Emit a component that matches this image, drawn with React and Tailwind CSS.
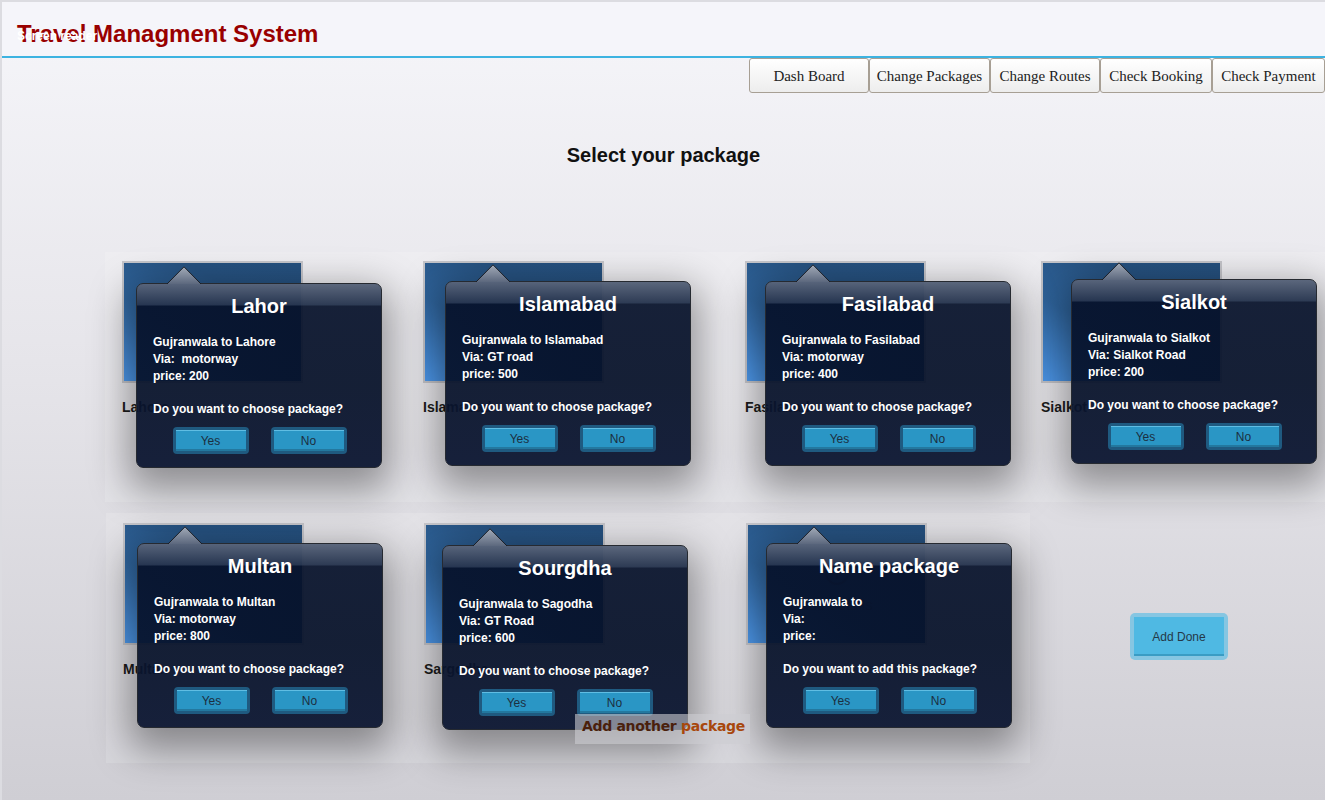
import React from "react";

const navItems = [
  { label: "Dash Board", w: "w-[120px]" },
  { label: "Change Packages", w: "w-[121px]" },
  { label: "Change Routes", w: "w-[110px]" },
  { label: "Check Booking", w: "w-[112px]" },
  { label: "Check Payment", w: "w-[113px]" },
];

const rowOne = [
  {
    title: "Lahor",
    label: "Lahore",
    lines: ["Gujranwala to Lahore", "Via:\u00a0 motorway", "price: 200"],
    w: "w-[309px]",
    img: "ml-[17px]",
    pop: "left-[31px] top-[31px]",
  },
  {
    title: "Islamabad",
    label: "Islamabad",
    lines: ["Gujranwala to Islamabad", "Via: GT road", "price: 500"],
    w: "w-[320px]",
    img: "ml-[9px]",
    pop: "left-[31px] top-[29px]",
  },
  {
    title: "Fasilabad",
    label: "Fasilabad",
    lines: ["Gujranwala to Fasilabad", "Via: motorway", "price: 400"],
    w: "w-[296px]",
    img: "ml-[11px]",
    pop: "left-[31px] top-[29px]",
  },
  {
    title: "Sialkot",
    label: "Sialkot",
    lines: ["Gujranwala to Sialkot", "Via: Sialkot Road", "price: 200"],
    w: "w-[295px]",
    img: "ml-[11px]",
    pop: "left-[41px] top-[27px]",
  },
];

const rowTwo = [
  {
    title: "Multan",
    label: "Multan",
    lines: ["Gujranwala to Multan", "Via: motorway", "price: 800"],
    w: "w-[308px]",
    img: "ml-[17px]",
    pop: "left-[31px] top-[30px]",
  },
  {
    title: "Sourgdha",
    label: "Sargodha",
    lines: ["Gujranwala to Sagodha", "Via: GT Road", "price: 600"],
    w: "w-[320px]",
    img: "ml-[10px]",
    pop: "left-[28px] top-[32px]",
  },
  {
    title: "Name package",
    label: "",
    lines: ["Gujranwala to", "Via:", "price:"],
    question: "Do you want to add this package?",
    w: "w-[296px]",
    img: "ml-[12px]",
    pop: "left-[32px] top-[30px]",
    addTile: true,
  },
];

const PopButton = ({ children }) => (
  <div className="h-[27px] w-[76px] rounded-[4px] bg-[#1f5a80] p-[3px]">
    <div className="flex h-full items-center justify-center border-t border-[#5fbde3] bg-[#2a96c5] text-[12px] leading-none text-[#1c2f40] shadow-[inset_0_-2px_0_#23789f]">
      {children}
    </div>
  </div>
);

const Popup = ({ item }) => (
  <div className={`absolute z-10 h-[185px] w-[246px] ${item.pop}`}>
    <svg
      className="absolute left-[30px] top-[-17px]"
      width="36"
      height="18"
      viewBox="0 0 36 18"
    >
      <defs>
        <linearGradient id="tri" x1="0" y1="0" x2="0" y2="1">
          <stop offset="0" stopColor="#a3abb8" />
          <stop offset="1" stopColor="#5a667c" />
        </linearGradient>
      </defs>
      <path d="M0.5 18.5 L18 0.8 L35.5 18.5" fill="url(#tri)" stroke="#1c1f26" />
    </svg>
    <div className="h-full rounded-[7px] border border-[#262a31] bg-[linear-gradient(180deg,rgba(88,100,122,0.98)_0px,rgba(38,52,78,0.96)_21px,rgba(6,17,42,0.93)_22px,rgba(5,16,40,0.93)_55%,rgba(18,28,55,0.98)_100%)] px-[16px] pt-[10px] text-white shadow-[0_14px_38px_8px_rgba(0,0,0,0.38)]">
      <h2 className="text-center text-[20px] font-bold leading-[24px]">
        {item.title}
      </h2>
      <div className="mt-[16px] text-[12px] font-bold leading-[17px]">
        {item.lines.map((l) => (
          <p key={l}>{l}</p>
        ))}
      </div>
      <p className="mt-[16px] text-[12px] font-bold leading-[17px] whitespace-nowrap">
        {item.question || "Do you want to choose package?"}
      </p>
      <div className="mt-[9px] flex justify-center gap-[22px] pl-[1px]">
        <PopButton>Yes</PopButton>
        <PopButton>No</PopButton>
      </div>
    </div>
  </div>
);

const Tile = ({ item, top }) => (
  <div className={`relative h-[250px] shrink-0 bg-white/15 ${item.w}`}>
    <div
      className={`${item.img} ${top} flex h-[122px] w-[181px] flex-col items-center justify-center border-2 border-[#c4c4c9] bg-[linear-gradient(30deg,#4e9aee_0%,#2f649c_38%,#26517f_70%,#25507e_100%)]`}
    >
      {item.addTile && (
        <>
          <svg width="26" height="26" viewBox="0 0 26 26" className="mt-[8px]">
            <circle cx="13" cy="13" r="11" fill="none" stroke="#2d4466" strokeWidth="2" />
            <path d="M13 7v12M7 13h12" stroke="#2d4466" strokeWidth="2" />
          </svg>
          <span className="mt-[8px] text-[15px] text-[#2d4466]">add details</span>
        </>
      )}
    </div>
    {item.label && (
      <p className={`${item.img} mt-[16px] text-[14px] font-bold leading-[16px] text-[#1c1c1c]`}>
        {item.label}
      </p>
    )}
    <Popup item={item} />
  </div>
);

export default function App() {
  return (
    <div className="min-h-[800px] w-full border-l-2 border-t-2 border-[#dcdce1] bg-[linear-gradient(180deg,#f6f6fa_0%,#e6e5ea_45%,#cfced4_100%)] font-['Liberation_Sans',Arial,sans-serif]">
      <header className="relative h-[56px] border-b-2 border-[#3db3e1] bg-[#f5f5fa]">
        <h1 className="pl-[15px] pt-[18px] text-[24px] font-bold leading-[28px] text-[#990000]">
          Travel Managment System
        </h1>
        <span className="absolute left-[15px] top-[27px] text-[12px] font-bold leading-[14px] text-white">
          Screen reader
        </span>
      </header>

      <nav className="flex justify-end">
        {navItems.map((n) => (
          <button
            key={n.label}
            className={`${n.w} h-[35px] rounded-[3px] border border-[#a79f94] bg-[linear-gradient(180deg,#ffffff,#ededed)] pt-[1px] font-['Liberation_Serif',serif] text-[15px] text-[#222]`}
          >
            {n.label}
          </button>
        ))}
      </nav>

      <h2 className="mt-[50px] text-center text-[20px] font-bold leading-[24px] text-[#111]">
        Select your package
      </h2>

      <div className="mt-[85px] flex pl-[103px]">
        {rowOne.map((item) => (
          <Tile key={item.title} item={item} top="mt-[9px]" />
        ))}
      </div>

      <div className="relative mt-[11px] flex pl-[104px]">
        {rowTwo.map((item) => (
          <Tile key={item.title} item={item} top="mt-[10px]" />
        ))}
        <div className="h-[250px] flex-1">
          <button className="ml-[100px] mt-[100px] h-[47px] w-[98px] rounded-[5px] bg-[#86c6e2] p-[4px]">
            <div className="flex h-full items-center justify-center bg-[#4fb9e3] text-[12px] text-[#253847] shadow-[inset_0_-2px_0_#3a9cc4]">
              Add Done
            </div>
          </button>
        </div>
        <div className="absolute left-[573px] top-[201px] z-20 flex h-[30px] w-[175px] items-center justify-end bg-[rgba(205,205,210,0.6)] pb-[6px] pr-[5px] font-['DejaVu_Sans',cursive] text-[14px] font-bold tracking-[-0.3px]">
          <span className="text-[#4a1f0c]">Add another&nbsp;</span>
          <span className="text-[#a8470c]">package</span>
        </div>
      </div>
    </div>
  );
}
